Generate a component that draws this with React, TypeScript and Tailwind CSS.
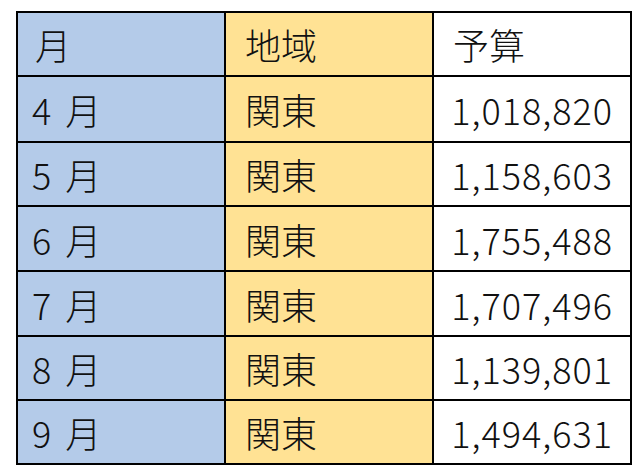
import React from 'react';

const rows = [
  { month: '4', region: '関東', budget: '1,018,820', h: 'h-[64px]' },
  { month: '5', region: '関東', budget: '1,158,603', h: 'h-[62px]' },
  { month: '6', region: '関東', budget: '1,755,488', h: 'h-[63px]' },
  { month: '7', region: '関東', budget: '1,707,496', h: 'h-[63px]' },
  { month: '8', region: '関東', budget: '1,139,801', h: 'h-[62px]' },
  { month: '9', region: '関東', budget: '1,494,631', h: 'h-[62px]' },
];

export default function App() {
  return (
    <div className="w-[642px] h-[472px] bg-white pt-[11px] pl-[16px] text-[36px] font-light text-[#111] font-['Noto_Sans_CJK_JP','Noto_Sans',sans-serif] leading-none">
      <div className="grid grid-cols-[206px_206px_196px] gap-[2px] bg-black p-[2px] w-[616px]">
        {/* Header */}
        <div className="h-[62px] bg-[#b4cbe9] flex items-center pl-[17px]">月</div>
        <div className="h-[62px] bg-[#ffe294] flex items-center pl-[19px]">地域</div>
        <div className="h-[62px] bg-white flex items-center pl-[19px]">予算</div>

        {rows.map((r) => (
          <React.Fragment key={r.month}>
            <div className={`${r.h} bg-[#b4cbe9] flex items-center pl-[14px]`}>
              <span>{r.month}</span>
              <span className="ml-[14px]">月</span>
            </div>
            <div className={`${r.h} bg-[#ffe294] flex items-center pl-[19px]`}>{r.region}</div>
            <div className={`${r.h} bg-white flex items-center justify-end pr-[17px] tracking-[1px]`}>{r.budget}</div>
          </React.Fragment>
        ))}
      </div>
    </div>
  );
}
